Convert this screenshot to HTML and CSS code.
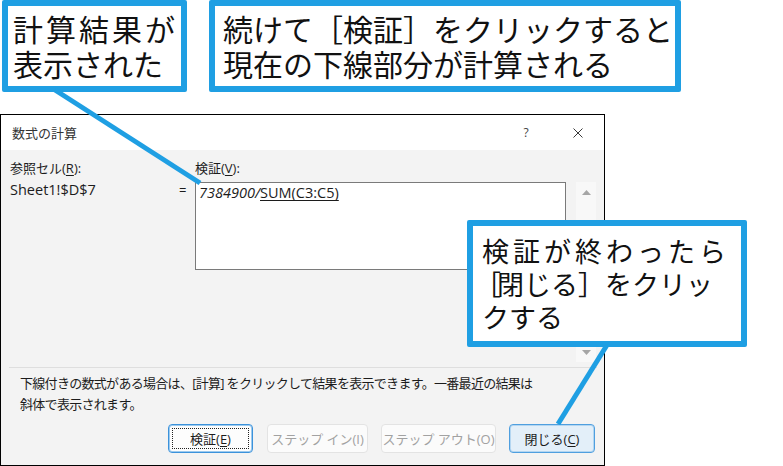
FILE: index.html
```html
<!DOCTYPE html>
<html lang="ja">
<head>
<meta charset="utf-8">
<title>数式の計算</title>
<link rel="stylesheet" href="styles.css">
</head>
<body>
<div class="page">
  <div class="callouts">
    <div class="callout c1"><span class="sp3">計算結果が</span><br>表示された</div>
    <div class="callout c2">続けて［検証］をクリックすると<br>現在の下線部分が計算される</div>
  </div>

  <div class="dialog">
    <div class="titlebar">
      <span class="title">数式の計算</span>
      <span class="help">?</span>
      <svg class="close" width="10" height="10" viewBox="0 0 10 10"><path d="M0.5 0.5 L9.5 9.5 M9.5 0.5 L0.5 9.5" stroke="#3a3a3a" stroke-width="1" fill="none"/></svg>
    </div>
    <div class="body">
      <div class="main">
        <div class="refcol">
          <div class="label">参照セル(<u>R</u>):</div>
          <div class="ref">Sheet1!$D$7</div>
        </div>
        <div class="eq">=</div>
        <div class="evalcol">
          <div class="label">検証(<u>V</u>):</div>
          <div class="evalbox"><span class="res">7384900/</span><span class="pend">SUM(C3:C5)</span></div>
        </div>
        <div class="scroll">
          <svg width="9" height="5" viewBox="0 0 9 5"><path d="M4.5 0 L9 5 L0 5 Z" fill="#a6a6a6"/></svg>
          <svg width="9" height="5" viewBox="0 0 9 5"><path d="M0 0 L9 0 L4.5 5 Z" fill="#a6a6a6"/></svg>
        </div>
      </div>
      <div class="sep"></div>
      <p class="note">下線付きの数式がある場合は、[計算] をクリックして結果を表示できます。一番最近の結果は<br>斜体で表示されます。</p>
      <div class="buttons">
        <button class="btn default w1"><span class="focus">検証(<u>E</u>)</span></button>
        <button class="btn disabled w2">ステップ イン(I)</button>
        <button class="btn disabled w3">ステップ アウト(O)</button>
        <button class="btn primary w4">閉じる(<u>C</u>)</button>
      </div>
    </div>
  </div>

  <svg class="leaders" width="783" height="466" viewBox="0 0 783 466">
    <line x1="55" y1="90" x2="200" y2="183" stroke="#1f9fe3" stroke-width="5"/>
    <line x1="607" y1="345" x2="558" y2="424" stroke="#1f9fe3" stroke-width="5"/>
  </svg>

  <div class="callout c3"><span class="sp4">検証が終わったら</span><br><span class="lead">［</span>閉じる］をクリッ<br>クする</div>
</div>
</body>
</html>
```

FILE: styles.css
```css
html, body {
  margin: 0;
  padding: 0;
  background: #ffffff;
}

body {
  font-family: "Open Sans", "Noto Sans CJK JP", sans-serif;
  color: #1c1c1c;
}

.page {
  position: relative;
  width: 783px;
  height: 466px;
  overflow: hidden;
}

/* ---------- callouts ---------- */
.callouts {
  display: flex;
  gap: 22px;
  padding-left: 2px;
  height: 92px;
}

.callout {
  box-sizing: border-box;
  border: 6px solid #1f9fe3;
  border-radius: 2px;
  background: #ffffff;
  font-family: "Noto Sans CJK JP", sans-serif;
  color: #111111;
  white-space: nowrap;
}

.c1 {
  width: 185px;
  height: 92px;
  padding: 5px 0 5px 5px;
  font-size: 30px;
  line-height: 35px;
}

.c2 {
  width: 472px;
  height: 92px;
  padding: 5px 0 5px 8px;
  font-size: 30px;
  line-height: 35px;
}

.sp3 {
  letter-spacing: 3px;
}

.c3 {
  position: absolute;
  left: 467px;
  top: 220px;
  width: 280px;
  height: 127px;
  padding: 8px 0 8px 9px;
  font-size: 27px;
  line-height: 33px;
}

.sp4 {
  letter-spacing: 4px;
}

.lead {
  margin-left: -8px;
  letter-spacing: -4px;
}

.leaders {
  position: absolute;
  left: 0;
  top: 0;
  pointer-events: none;
}

/* ---------- dialog ---------- */
.dialog {
  box-sizing: border-box;
  margin-top: 22px;
  width: 605px;
  height: 352px;
  border: 1px solid #000000;
  background: #f3f3f3;
  font-size: 13px;
}

.titlebar {
  display: flex;
  align-items: center;
  height: 35px;
  background: #ffffff;
  padding-left: 11px;
}

.title {
  flex: 1;
  color: #333333;
  font-size: 13px;
}

.help {
  width: 8px;
  text-align: center;
  font-size: 12px;
  color: #444444;
}

.close {
  margin-left: 43px;
  margin-right: 21px;
}

.body {
  padding-top: 9px;
}

.main {
  display: flex;
  padding-left: 9px;
  height: 203px;
}

.label {
  height: 18px;
  line-height: 18px;
}

.label u,
.btn u {
  text-underline-offset: 2px;
}

.refcol {
  width: 168px;
}

.ref {
  margin-top: 4px;
  height: 18px;
  line-height: 18px;
  font-size: 14.5px;
}

.eq {
  width: 17px;
  padding-top: 22px;
  line-height: 18px;
  padding-left: 1px;
  box-sizing: border-box;
}

.evalcol {
  width: 371px;
}

.evalbox {
  box-sizing: border-box;
  margin-top: 5px;
  height: 88px;
  border: 1px solid #7a7a7a;
  background: #ffffff;
  padding: 1px 0 0 3px;
  line-height: 18px;
  font-size: 14.5px;
}

.res {
  font-style: italic;
}

.pend {
  text-decoration: underline;
  text-underline-offset: 2px;
}

.scroll {
  box-sizing: border-box;
  margin-left: 10px;
  margin-top: 23px;
  width: 20px;
  height: 180px;
  background: #f8f8f8;
  display: flex;
  flex-direction: column;
  justify-content: space-between;
  align-items: center;
  padding: 8px 0 7px;
}

.sep {
  height: 1px;
  margin: 5px 7px 0 8px;
  background: #dedede;
}

.note {
  margin: 5px 0 0 19px;
  line-height: 21px;
  font-size: 13px;
  letter-spacing: -0.7px;
  white-space: nowrap;
  color: #1c1c1c;
}

.buttons {
  display: flex;
  justify-content: flex-end;
  gap: 13px;
  margin-top: 9px;
  padding-right: 9px;
}

.btn {
  box-sizing: border-box;
  height: 29px;
  border: 1px solid #d6d6d6;
  border-radius: 4px;
  background: #fdfdfd;
  font-family: inherit;
  font-size: 13px;
  color: #1c1c1c;
  display: flex;
  align-items: center;
  justify-content: center;
  padding: 0;
  margin: 0;
}

.w1 { width: 85px; margin-right: 1px; }
.w2 { width: 101px; }
.w3 { width: 115px; }
.w4 { width: 86px; }

.btn.default {
  border: 1px solid #3b92db;
  box-shadow: inset 0 0 0 1px #9dcaee;
  padding: 3px;
  align-items: stretch;
}

.focus {
  flex: 1;
  display: flex;
  align-items: center;
  justify-content: center;
  border: 1px dotted #222222;
}

.btn.disabled {
  color: #a2a2a2;
  border-color: #e3e3e3;
  background: #fbfbfb;
}

.btn.primary {
  background: #e3eff9;
  border: 1px solid #4f9fdf;
  box-shadow: inset 0 0 0 1px #b4d6f1;
}
```
